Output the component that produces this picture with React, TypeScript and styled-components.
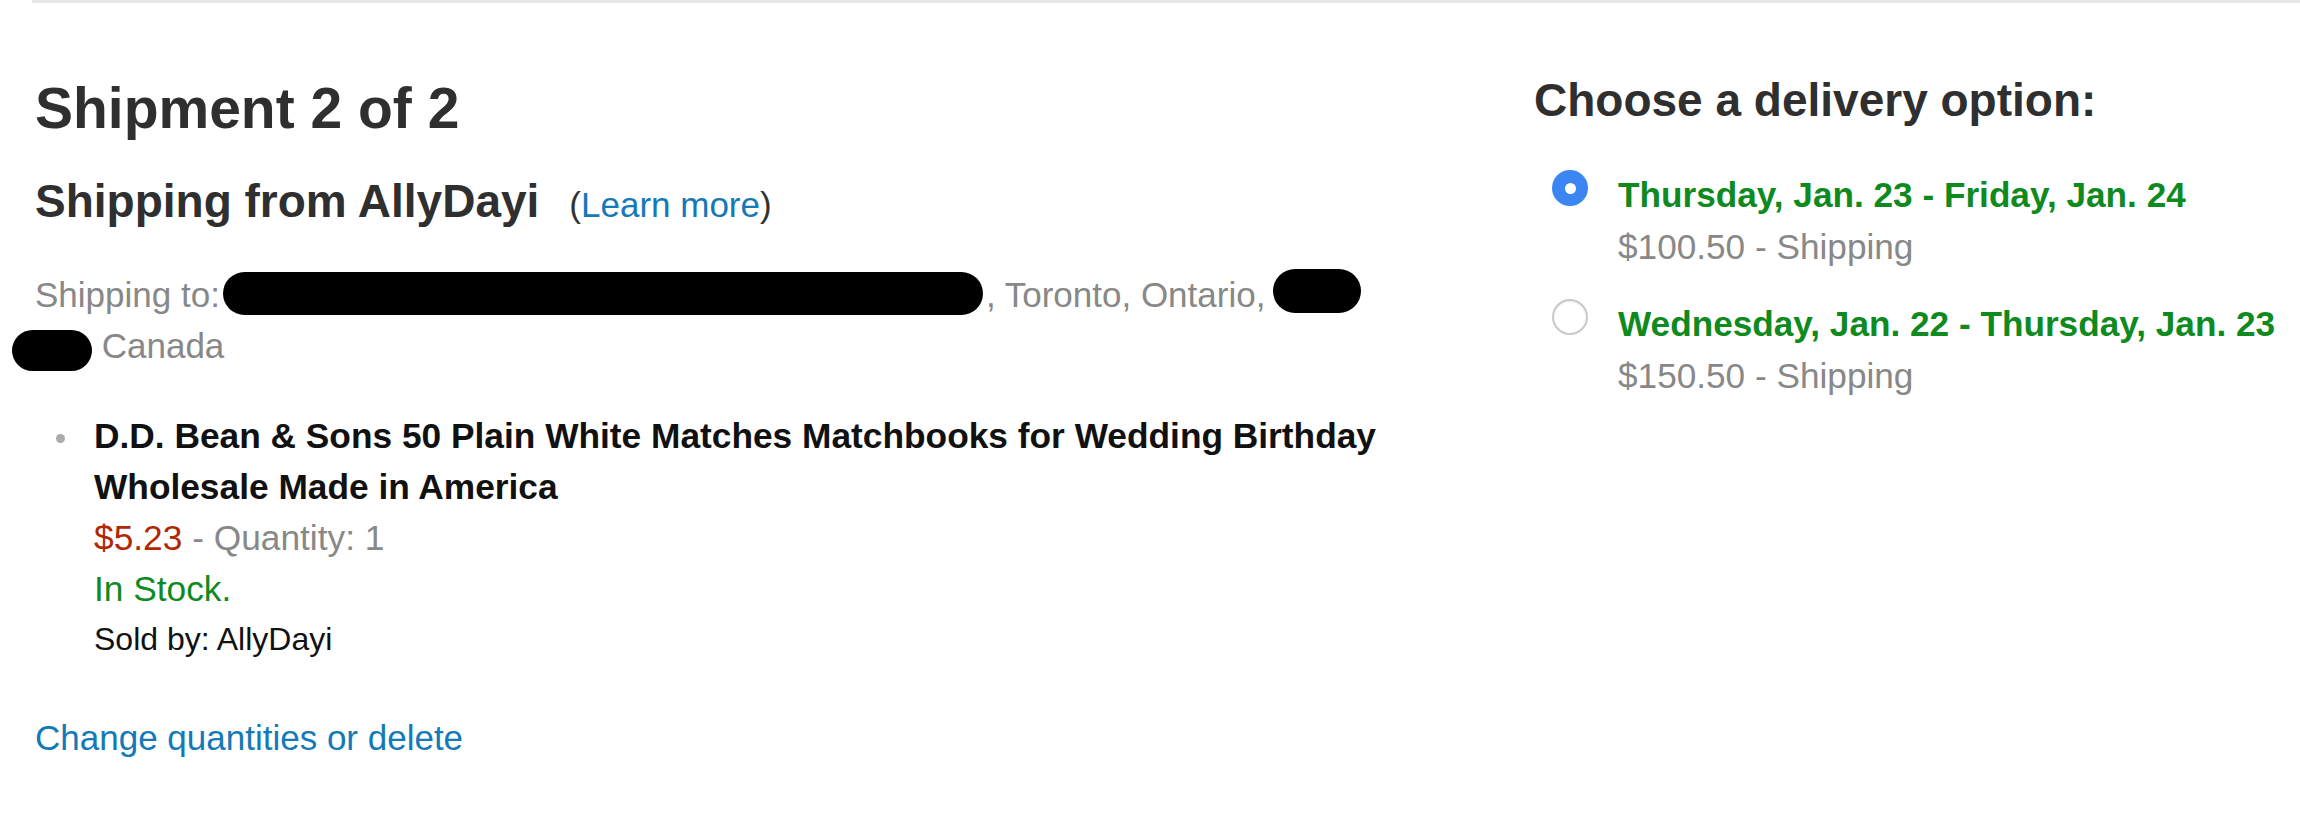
import styled, { createGlobalStyle, css } from "styled-components";

const GlobalStyle = createGlobalStyle`
  body {
    margin: 0;
    background: #fff;
    font-family: "Liberation Sans", Arial, Helvetica, sans-serif;
    color: #111;
  }
`;

const Page = styled.div`
  margin-left: 32px;
  border-top: 3px solid #e7e7e7;
  display: flex;
`;

const ShipmentColumn = styled.section`
  flex: none;
  width: 1499px;
  padding-left: 3px;
`;

const Heading = styled.h1`
  margin: 72px 0 0;
  font-size: 57px;
  line-height: 66px;
  font-weight: 700;
  color: #2f2f2f;
`;

const SubHeading = styled.h2<{ $top: number }>`
  margin: ${(p) => p.$top}px 0 0;
  font-size: 46px;
  line-height: 54px;
  font-weight: 700;
  color: #2f2f2f;
`;

const LearnMore = styled.span`
  margin-left: 30px;
  font-size: 35px;
  font-weight: 400;
  color: #333;
`;

const Link = styled.a`
  color: #1479b8;
  text-decoration: none;
  cursor: pointer;
`;

const Address = styled.div`
  margin-top: 37px;
  max-width: 1370px;
  font-size: 35px;
  line-height: 51px;
  color: #888;
`;

// redaction marks over the address
const Blot = styled.span<{ $w: number; $h: number; $drop: number; $ml?: number; $mr?: number }>`
  display: inline-block;
  width: ${(p) => p.$w}px;
  height: ${(p) => p.$h}px;
  margin-left: ${(p) => p.$ml ?? 0}px;
  margin-right: ${(p) => p.$mr ?? 0}px;
  vertical-align: -${(p) => p.$drop}px;
  background: #000;
  border-radius: 22px;
`;

const Item = styled.div`
  margin-top: 39px;
  display: flex;
  padding-left: 21px;
`;

const Bullet = styled.span`
  flex: none;
  width: 9px;
  height: 9px;
  margin-top: 24px;
  border-radius: 50%;
  background: #aaa;
`;

const ItemBody = styled.div`
  margin-left: 29px;
  max-width: 1350px;
  font-size: 35.3px;
  line-height: 51px;
`;

const ItemTitle = styled.div`
  font-weight: 700;
  color: #111;
`;

const Price = styled.span`
  color: #b12704;
`;

const Muted = styled.span`
  color: #888;
`;

const Stock = styled.div`
  color: #0e8a1f;
`;

const SoldBy = styled.div`
  font-size: 32px;
  color: #111;
`;

const ChangeLink = styled(Link)`
  display: block;
  margin-top: 47px;
  font-size: 35px;
  line-height: 51px;
`;

const DeliveryColumn = styled.section`
  flex: 1;
`;

const OptionList = styled.div`
  margin-top: 42px;
  display: flex;
  flex-direction: column;
  gap: 25px;
`;

const Option = styled.label`
  display: flex;
  gap: 30px;
  padding-left: 18px;
  cursor: pointer;
`;

const Radio = styled.span<{ $checked?: boolean }>`
  flex: none;
  box-sizing: border-box;
  width: 36px;
  height: 36px;
  margin-top: 1px;
  border-radius: 50%;
  ${(p) =>
    p.$checked
      ? css`
          background: #3b86f3;
          display: flex;
          align-items: center;
          justify-content: center;
          &::after {
            content: "";
            width: 11px;
            height: 11px;
            border-radius: 50%;
            background: #fff;
          }
        `
      : css`
          background: #fff;
          border: 2px solid #c9c9c9;
          box-shadow: inset 0 1px 2px rgba(0, 0, 0, 0.08);
        `}
`;

const OptionText = styled.div`
  font-size: 35.2px;
  line-height: 52px;
`;

const OptionDate = styled.div`
  font-weight: 700;
  color: #0e8a1f;
`;

const OptionCost = styled.div`
  color: #888;
`;

const options = [
  { date: "Thursday, Jan. 23 - Friday, Jan. 24", cost: "$100.50 - Shipping", checked: true },
  { date: "Wednesday, Jan. 22 - Thursday, Jan. 23", cost: "$150.50 - Shipping", checked: false },
];

export default function App() {
  return (
    <>
      <GlobalStyle />
      <Page>
        <ShipmentColumn>
          <Heading>Shipment 2 of 2</Heading>
          <SubHeading $top={33}>
            Shipping from AllyDayi
            <LearnMore>
              (<Link>Learn more</Link>)
            </LearnMore>
          </SubHeading>
          <Address>
            Shipping to:
            <Blot $w={760} $h={43} $drop={8} $ml={3} $mr={3} />, Toronto, Ontario,
            <Blot $w={88} $h={44} $drop={6} $ml={8} /> <Blot $w={80} $h={41} $drop={13} $ml={-23} /> Canada
          </Address>
          <Item>
            <Bullet />
            <ItemBody>
              <ItemTitle>
                D.D. Bean &amp; Sons 50 Plain White Matches Matchbooks for Wedding Birthday Wholesale Made in America
              </ItemTitle>
              <div>
                <Price>$5.23</Price>
                <Muted> - Quantity: 1</Muted>
              </div>
              <Stock>In Stock.</Stock>
              <SoldBy>Sold by: AllyDayi</SoldBy>
            </ItemBody>
          </Item>
          <ChangeLink>Change quantities or delete</ChangeLink>
        </ShipmentColumn>
        <DeliveryColumn>
          <SubHeading $top={70}>Choose a delivery option:</SubHeading>
          <OptionList>
            {options.map((o) => (
              <Option key={o.date}>
                <Radio $checked={o.checked} />
                <OptionText>
                  <OptionDate>{o.date}</OptionDate>
                  <OptionCost>{o.cost}</OptionCost>
                </OptionText>
              </Option>
            ))}
          </OptionList>
        </DeliveryColumn>
      </Page>
    </>
  );
}
